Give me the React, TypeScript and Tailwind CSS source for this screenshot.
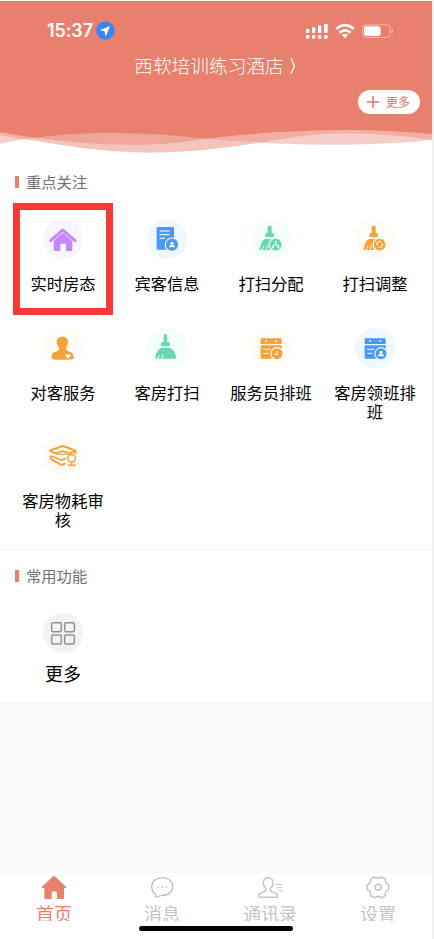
import React from "react";

const CORAL = "#e9806e";
const GREEN = "#68d8ae";
const ORANGE = "#f3a33a";
const BLUE = "#4899f8";

function HouseIcon() {
    return (
        <svg viewBox="0 0 120 120" className="size-10">
            <path d="M23 65 59 33 96 65" fill="none" stroke="#c488fb" strokeWidth="9" strokeLinecap="round" strokeLinejoin="round" />
            <path d="M59 41 88 66V93a3 3 0 0 1-3 3H69V74H52V96H35a3 3 0 0 1-3-3V65Z" fill="#c488fb" />
        </svg>
    );
}

function PersonMark({ cx, cy }: { cx: number; cy: number }) {
    return (
        <g fill="#fff">
            <circle cx={cx} cy={cy - 4} r="4.500" />
            <path d={`M${cx - 9} ${cy + 8}q0-8 9-8t9 8Z`} />
        </g>
    );
}

function GuestIcon() {
    return (
        <svg viewBox="0 0 120 120" className="size-10">
            <rect x="29" y="24" width="52" height="68" rx="3" fill={BLUE} />
            <path d="M38 36H68M38 47H68M38 58H54" stroke="#fff" strokeWidth="3" />
            <circle cx="75" cy="77" r="20" fill={BLUE} stroke="#f0f8ff" strokeWidth="3.500" />
            <PersonMark cx={75} cy={77} />
        </svg>
    );
}

function BroomBadgeIcon({ color, bg, kind }: { color: string; bg: string; kind: "assign" | "adjust" }) {
    return (
        <svg viewBox="0 0 120 120" className="size-10">
            <rect x="50" y="20" width="12" height="27" rx="5" fill={color} />
            <rect x="43" y="42" width="26" height="13" rx="5" fill={color} />
            <path d="M42 60H74V93H28Q24 93 26 88 31 66 42 60Z" fill={color} />
            <path d="M33 94Q35 86 39 80M46 94Q47 86 50 78" stroke={bg} strokeWidth="3" fill="none" />
            <circle cx="74" cy="77" r="19.500" fill={color} stroke={bg} strokeWidth="4" />
            {kind === "assign" ? (
                <g stroke="#fff" strokeWidth="3" fill="none">
                    <path d="M74 69V77M66 84V78H82V84" />
                    <circle cx="74" cy="69" r="2" />
                    <path d="M63 85h6M79 85h6" strokeWidth="5" />
                </g>
            ) : (
                <g stroke="#fff" strokeWidth="3" fill="none">
                    <path d="M66 76V71l8-4 5 3M82 76V82l-8 4-5-3" />
                    <path d="M79 76h6M63 77h6" />
                </g>
            )}
        </svg>
    );
}

function BroomIcon() {
    return (
        <svg viewBox="0 0 120 120" className="size-10">
            <rect x="50" y="19" width="10" height="28" rx="4" fill={GREEN} />
            <rect x="42" y="42" width="27" height="13" rx="5" fill={GREEN} />
            <path d="M43 59H69Q86 68 87 89 87 92 84 92H28Q24 92 25 87 28 66 43 59Z" fill={GREEN} />
            <path d="M32 93Q33 87 37 82M45 93Q45 87 49 81" stroke="#f4fffb" strokeWidth="3" fill="none" />
        </svg>
    );
}

function ServiceIcon() {
    return (
        <svg viewBox="0 0 120 120" className="size-10">
            <path d="M58 26C69 26 75 32 75 42 75 51 70 55 69 60 68 66 71 69 80 71 89 73 92 82 92 91Q92 93 88 94 59 97 29 94 25 94 26 90C26 79 29 73 36 71 47 69 49 66 48 60 46 55 41 50 41 41 42 31 48 26 58 26Z" fill={ORANGE} />
            <path d="M75 92 68 85Q66 80 70 79 73 78 75 81 77 78 80 79 84 81 82 85Z" fill="#fff" />
        </svg>
    );
}

function CalendarIcon({ color, bg, kind }: { color: string; bg: string; kind: "clock" | "person" }) {
    return (
        <svg viewBox="0 0 120 120" className="size-10">
            <path d="M32 31H89a3 3 0 0 1 3 3V48H29V34a3 3 0 0 1 3-3ZM29 52H92V92H32a3 3 0 0 1-3-3Z" fill={color} />
            <path d="M45 36v6M42 39h6M76 36v6M73 39h6" stroke="#fff" strokeWidth="2.500" />
            <path d="M37 64H58M37 76H52" stroke="#fff" strokeWidth="3" />
            <circle cx="78" cy="77" r="20" fill={bg} />
            <circle cx="78" cy="77" r="16.500" fill={color} />
            {kind === "clock" ? (
                <path d="M79 68V79H71" fill="none" stroke="#fff" strokeWidth="3.500" />
            ) : (
                <PersonMark cx={78} cy={77} />
            )}
        </svg>
    );
}

function AuditIcon() {
    return (
        <svg viewBox="0 0 120 120" className="size-10" fill="none" stroke={ORANGE} strokeWidth="6" strokeLinecap="round" strokeLinejoin="round">
            <path d="M22 43 59 30 97 43V52" />
            <path d="M22 45 40 53Q50 46 59 46T78 53L96 45" />
            <path d="M40 53 59 56 78 53" strokeWidth="4" />
            <path d="M24 61Q20 66 26 70L52 85Q58 88 65 83" />
            <path d="M28 61 52 71Q59 74 66 67" strokeWidth="5" />
            <circle cx="86" cy="67" r="11.500" strokeWidth="4.500" />
            <path d="M86 79V88M75 88H97" strokeWidth="4.500" />
        </svg>
    );
}

function MoreIcon() {
    return (
        <svg viewBox="0 0 120 120" className="size-10" fill="none" stroke="#929292" strokeWidth="4.500">
            <rect x="26" y="29" width="29" height="27" rx="4" />
            <rect x="65" y="29" width="29" height="27" rx="4" />
            <rect x="26" y="66" width="29" height="27" rx="4" />
            <rect x="65" y="66" width="29" height="27" rx="4" />
        </svg>
    );
}

const features = [
    { label: "实时房态", bg: "bg-[#f8f5ff]", icon: <HouseIcon />, active: true },
    { label: "宾客信息", bg: "bg-[#f0f8ff]", icon: <GuestIcon /> },
    { label: "打扫分配", bg: "bg-[#f4fffb]", icon: <BroomBadgeIcon color={GREEN} bg="#f4fffb" kind="assign" /> },
    { label: "打扫调整", bg: "bg-[#fffcf5]", icon: <BroomBadgeIcon color={ORANGE} bg="#fffcf5" kind="adjust" /> },
    { label: "对客服务", bg: "bg-[#fffcf5]", icon: <ServiceIcon /> },
    { label: "客房打扫", bg: "bg-[#f4fffb]", icon: <BroomIcon /> },
    { label: "服务员排班", bg: "bg-[#fffcf5]", icon: <CalendarIcon color={ORANGE} bg="#fffcf5" kind="clock" /> },
    { label: "客房领班排班", bg: "bg-[#f0f8ff]", icon: <CalendarIcon color={BLUE} bg="#f0f8ff" kind="person" /> },
    { label: "客房物耗审核", bg: "bg-[#fffcf5]", icon: <AuditIcon /> },
];

const tabs = [
    {
        label: "首页",
        color: "text-[#e9806e]",
        icon: <path d="M35 5Q39 1 43 5L75 35Q77 39 73 39H69V69Q69 72 66 72H48V55Q48 49 40 49T32 55V72H13Q10 72 10 69V39H5Q1 39 3 35Z" fill="currentColor" />,
    },
    {
        label: "消息",
        color: "text-[#c3c4cf]",
        icon: (
            <g fill="none" stroke="currentColor" strokeWidth="4.500" strokeLinejoin="round">
                <path d="M20 66V57C11 52 8 43 8 35 8 18 22 8 40 8S71 18 71 34 59 61 40 61C34 61 28 66 20 66Z" />
                <path d="M25 36h5M37.500 36h5M50 36h5" />
            </g>
        ),
    },
    {
        label: "通讯录",
        color: "text-[#c3c4cf]",
        icon: (
            <g fill="none" stroke="currentColor" strokeWidth="4.500" strokeLinejoin="round">
                <path d="M33 8C44 8 49 16 48 26 47 34 44 38 40 41 38 48 42 50 53 53 60 55 62 59 62 64Q62 67 59 67H8Q5 67 5 64C5 59 7 55 14 53 25 50 29 48 27 41 22 37 19 33 19 25 19 15 24 8 33 8Z" />
                <path d="M55 29H75M60 38H75M64 47H75" strokeWidth="3" />
            </g>
        ),
    },
    {
        label: "设置",
        color: "text-[#c3c4cf]",
        icon: (
            <g fill="none" stroke="currentColor" strokeWidth="4.500" strokeLinejoin="round">
                <path d="M71.300 30.100V43.900Q58.900 48.500 61.100 61.500L49.200 68.400Q39 60 28.800 68.400L16.900 61.500Q19.100 48.500 6.700 43.900V30.100Q19.100 25.500 16.900 12.500L28.800 5.600Q39 14 49.200 5.600L61.100 12.500Q58.900 25.500 71.300 30.100Z" />
                <circle cx="39" cy="37" r="9" />
            </g>
        ),
    },
];

function StatusBar() {
    return (
        <div className="flex h-[59px] items-center pl-[47px] pr-[38px] text-white">
            <span className="font-['Inter'] text-[18px] font-semibold leading-none tracking-[-0.1px]">15:37</span>
            <svg viewBox="0 0 57 57" className="ml-[3px] size-[19px]">
                <circle cx="28.500" cy="28.500" r="28" fill="#3d85f7" />
                <path d="M42 15 31 43Q29 46 28 42L26 31 15 29Q11 28 15 26Z" fill="#fff" />
            </svg>
            <svg viewBox="0 0 264 48" className="ml-auto h-4 w-[88px]" fill="#fff">
                <rect x="0" y="17" width="10" height="13" rx="3" />
                <rect x="18" y="13" width="10" height="17" rx="3" />
                <rect x="36" y="7" width="10" height="23" rx="3" />
                <rect x="54" y="2" width="11" height="28" rx="3" />
                <rect x="0" y="36" width="10" height="11" rx="3" />
                <rect x="18" y="36" width="10" height="11" rx="3" />
                <rect x="36" y="36" width="10" height="11" rx="3" />
                <rect x="54" y="36" width="11" height="11" rx="3" />
                <g fill="none" stroke="#fff" strokeWidth="7.500">
                    <path d="M91 18Q117 -5 143 18" />
                    <path d="M100 29Q117 15 134 29" />
                </g>
                <path d="M107 36Q117 28 127 36L117 46Z" />
                <rect x="169.500" y="5.500" width="83" height="38" rx="11" fill="none" stroke="#fff" strokeOpacity="0.45" strokeWidth="3" />
                <rect x="174" y="10" width="50" height="29" rx="8" />
                <path d="M257 19Q261 20 261 25T257 31Z" fillOpacity="0.5" />
            </svg>
        </div>
    );
}

function SectionTitle({ children }: { children: React.ReactNode }) {
    return (
        <div className="flex h-[22px] items-center pl-[15px]">
            <span className="h-3 w-1 bg-[#e9806e]" />
            <h2 className="mb-[2px] ml-[7px] text-[15.300px] leading-[20px] text-[#707070]">{children}</h2>
        </div>
    );
}

export default function App() {
    return (
        <div className="h-[939px] w-[434px] overflow-hidden bg-[#f0f0f0] font-['Noto_Sans_CJK_SC',sans-serif]">
            <div className="flex h-full w-[432px] flex-col bg-[#fafafa]">
                <header className="h-[124px] shrink-0 border-t border-white bg-[#e9806e]">
                    <StatusBar />
                    <div className="flex h-[11px] items-center justify-center text-[18.700px] font-light text-white">
                        <h1 className="whitespace-nowrap">西软培训练习酒店</h1>
                        <svg viewBox="0 0 18 54" className="ml-[6px] mr-[2px] h-[18px] w-[6px]" fill="none" stroke="#fff" strokeWidth="4">
                            <path d="M3 4 13 27 3 50" />
                        </svg>
                    </div>
                    <div className="mt-[19px] flex justify-end pr-3">
                        <button className="flex h-6 w-[62px] items-center rounded-full bg-white pl-[9px] text-[12px] text-[#e9706b]">
                            <svg viewBox="0 0 12 12" className="mr-[7px] size-3" stroke="currentColor" strokeWidth="1.500">
                                <path d="M6 0V12M0 6H12" />
                            </svg>
                            <span className="whitespace-nowrap leading-none">更多</span>
                        </button>
                    </div>
                </header>

                <main className="shrink-0 bg-white">
                    <svg viewBox="0 0 1296 108" className="block h-9 w-[432px]">
                        <rect width="1296" height="90" fill={CORAL} />
                        <path d="M0 59C40 52 160 27 330 27 480 27 560 39 620 44S860 62 1000 62C1120 62 1230 55 1296 47V108H0Z" fill="#fff" fillOpacity="0.29" />
                        <path d="M0 24C60 34 200 62 400 62 500 62 560 52 620 44S850 18 1040 18C1130 18 1230 24 1296 30V108H0Z" fill="#fff" fillOpacity="0.36" />
                        <path d="M0 34C30 38 55 44 75 46 180 62 300 86 450 86 580 86 700 69 780 56S940 28 1040 28C1130 28 1230 38 1296 47V108H0Z" fill="#fff" fillOpacity="0.4" />
                        <path d="M0 59Q40 50 75 46C180 62 300 86 450 86 580 86 700 69 780 56 850 60 920 62 1000 62 1120 62 1230 55 1296 47V108H0Z" fill="#fff" />
                    </svg>

                    <section className="h-[390px] border-b border-[#f3f3f3] pt-[11px]">
                        <SectionTitle>重点关注</SectionTitle>
                        <div className="mt-[26px] grid auto-rows-[108.500px] grid-cols-4 pl-[11px] pr-[5px]">
                            {features.map((f) => (
                                <button key={f.label} className="relative flex flex-col items-center">
                                    {f.active && <span className="absolute -top-4 left-[2px] h-[112px] w-[100px] border-[7px] border-[#fb3838]" />}
                                    <span className={`rounded-full ${f.bg}`}>{f.icon}</span>
                                    <span className="mt-[15px] w-[86px] text-[16.300px] leading-[19px] text-black">{f.label}</span>
                                </button>
                            ))}
                        </div>
                    </section>

                    <section className="h-[152px] pt-[15px]">
                        <SectionTitle>常用功能</SectionTitle>
                        <div className="mt-[26px] grid grid-cols-4 pl-[11px] pr-[5px]">
                            <button className="flex flex-col items-center">
                                <span className="rounded-full bg-[#f3f3f3]"><MoreIcon /></span>
                                <span className="mt-[9px] text-[18px] leading-[22px] text-black">更多</span>
                            </button>
                        </div>
                    </section>
                </main>

                <nav className="relative mt-auto grid h-[66px] shrink-0 grid-cols-4 bg-white">
                    {tabs.map((tab) => (
                        <button key={tab.label} className={`flex h-12 flex-col items-center overflow-hidden pt-[2px] ${tab.color}`}>
                            <svg viewBox="0 0 78 78" className="size-[26px] shrink-0">{tab.icon}</svg>
                            <span className="mt-px text-[18px] leading-[22px]">{tab.label}</span>
                        </button>
                    ))}
                    <span className="absolute bottom-2 left-[139px] h-[5px] w-[154px] rounded-full bg-black" />
                </nav>
            </div>
        </div>
    );
}
